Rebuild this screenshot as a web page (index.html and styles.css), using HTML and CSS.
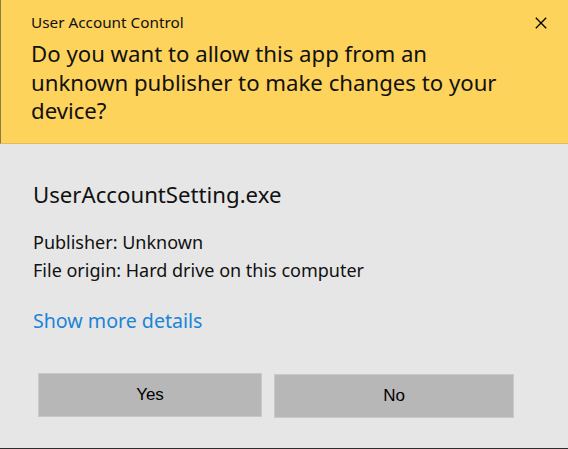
FILE: index.html
```html
<!DOCTYPE html>
<html lang="en">
<head>
<meta charset="utf-8">
<title>User Account Control</title>
<link rel="stylesheet" href="styles.css">
</head>
<body>
<div class="dialog">
  <header class="header">
    <div class="title-row">
      <span class="title">User Account Control</span>
      <svg class="close" width="12" height="12" viewBox="0 0 12 12" aria-label="Close">
        <path d="M0.8 0.8 L11.2 11.2 M11.2 0.8 L0.8 11.2" stroke="#000" stroke-width="1.3" fill="none"/>
      </svg>
    </div>
    <h1 class="question">Do you want to allow this app from an<br>unknown publisher to make changes to your<br>device?</h1>
  </header>
  <main class="content">
    <div class="app-name">UserAccountSetting.exe</div>
    <div class="meta">
      <div>Publisher: Unknown</div>
      <div>File origin: Hard drive on this computer</div>
    </div>
    <a class="details" href="#">Show more details</a>
    <div class="buttons">
      <button class="btn btn-yes">Yes</button>
      <button class="btn btn-no">No</button>
    </div>
  </main>
</div>
</body>
</html>
```
FILE: styles.css
```css
html, body {
  margin: 0;
  padding: 0;
}
body {
  width: 568px;
  height: 449px;
  background: #e6e6e6;
  font-family: "Noto Sans", "Open Sans", sans-serif;
  color: #000;
  overflow: hidden;
}
.dialog {
  height: 449px;
  box-sizing: border-box;
  border-bottom: 1px solid #2d2d2d;
  display: flex;
  flex-direction: column;
}
.header {
  background: #fed35c;
  border-left: 1px solid #8d7b45;
  border-bottom: 1px solid #e2bd57;
  height: 144px;
  box-sizing: border-box;
  padding: 12px 21px 0 30px;
}
.title-row {
  display: flex;
  justify-content: space-between;
  align-items: flex-start;
}
.title {
  font-size: 15.3px;
  line-height: 20px;
  color: #111;
}
.close {
  margin-top: 5px;
  display: block;
}
.question {
  margin: 8.4px 0 0;
  font-size: 22.2px;
  line-height: 28.3px;
  font-weight: normal;
  color: #111;
}
.content {
  padding: 36.6px 0 0 33px;
  display: flex;
  flex-direction: column;
  align-items: flex-start;
  color: #111;
}
.app-name {
  font-size: 22.2px;
  line-height: 28px;
}
.meta {
  margin-top: 19.3px;
  font-size: 18px;
  line-height: 28.5px;
}
.details {
  margin-top: 23.8px;
  font-size: 19.6px;
  line-height: 24px;
  color: #1a84d8;
  text-decoration: none;
}
.buttons {
  margin-top: 40.4px;
  margin-left: 5px;
  display: flex;
  gap: 12px;
  align-items: flex-start;
}
.btn {
  height: 44px;
  box-sizing: border-box;
  background: #b7b7b7;
  border: 1px solid #c8c8c8;
  font-family: "Liberation Sans", Arial, sans-serif;
  font-size: 17px;
  color: #000;
  padding: 0;
}
.btn-yes {
  width: 224px;
}
.btn-no {
  width: 240px;
  margin-top: 1px;
}
```
